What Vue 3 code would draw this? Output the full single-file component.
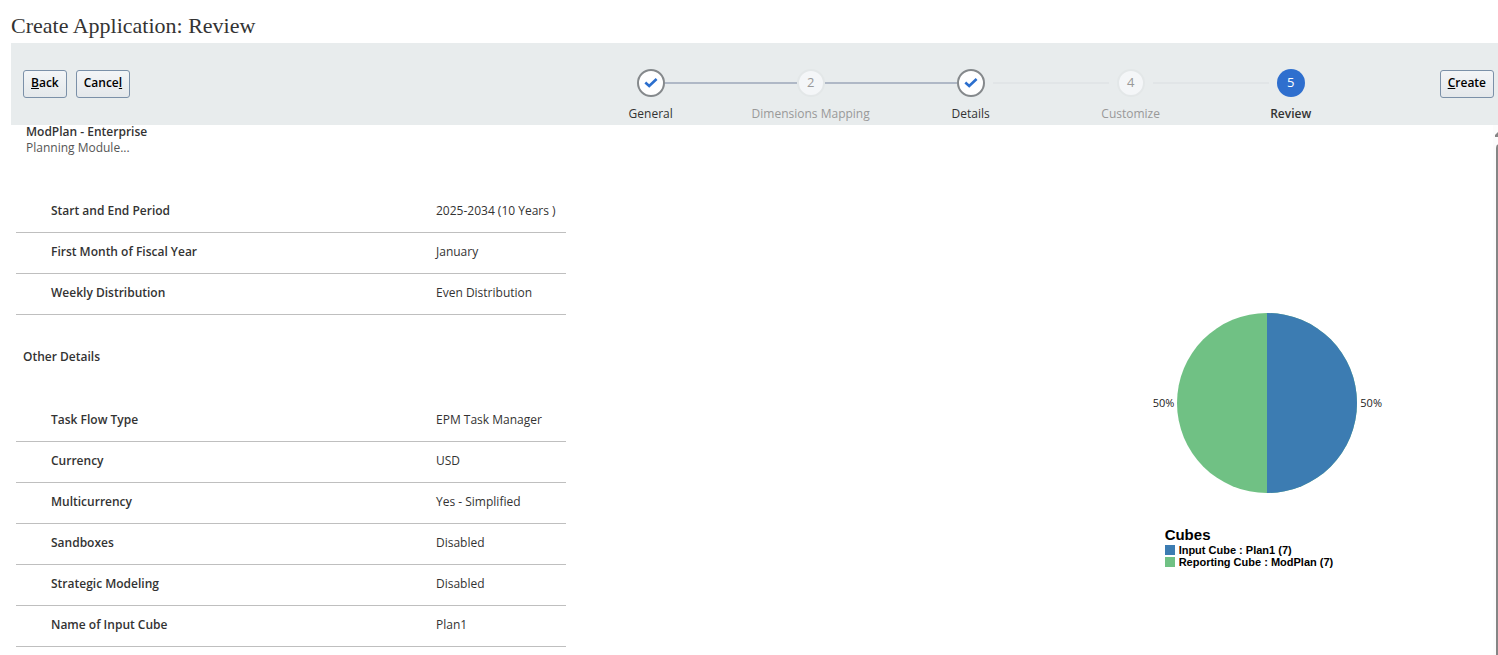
<script setup>
const steps = [
  { number: 1, label: 'General', state: 'done' },
  { number: 2, label: 'Dimensions Mapping', state: 'skipped' },
  { number: 3, label: 'Details', state: 'done' },
  { number: 4, label: 'Customize', state: 'skipped' },
  { number: 5, label: 'Review', state: 'current' },
]

const periodRows = [
  ['Start and End Period', '2025-2034 (10 Years )'],
  ['First Month of Fiscal Year', 'January'],
  ['Weekly Distribution', 'Even Distribution'],
]

const otherRows = [
  ['Task Flow Type', 'EPM Task Manager'],
  ['Currency', 'USD'],
  ['Multicurrency', 'Yes - Simplified'],
  ['Sandboxes', 'Disabled'],
  ['Strategic Modeling', 'Disabled'],
  ['Name of Input Cube', 'Plan1'],
]

const cubes = [
  { label: 'Input Cube : Plan1 (7)', kind: 'input' },
  { label: 'Reporting Cube : ModPlan (7)', kind: 'reporting' },
]
</script>

<template>
  <div class="page">
    <h1 class="title">Create Application: Review</h1>

    <header class="toolbar">
      <div class="actions">
        <button type="button" class="btn"><u>B</u>ack</button>
        <button type="button" class="btn">Cance<u>l</u></button>
      </div>
      <ol class="train">
        <li v-for="step in steps" :key="step.number" class="step" :class="step.state">
          <div class="track">
            <span class="line before"></span>
            <span class="dot">
              <svg v-if="step.state === 'done'" width="14" height="12" viewBox="0 0 14 12" aria-hidden="true">
                <path d="M1.3 5.6 L5.2 9 L12.6 2" fill="none" stroke="#2c6fce" stroke-width="2.6" />
              </svg>
              <template v-else>{{ step.number }}</template>
            </span>
            <span class="line after"></span>
          </div>
          <span class="step-label">{{ step.label }}</span>
        </li>
      </ol>
      <button type="button" class="btn"><u>C</u>reate</button>
    </header>

    <main class="content">
      <section class="details">
        <div class="module">
          <strong>ModPlan - Enterprise</strong>
          <span>Planning Module...</span>
        </div>
        <table class="facts">
          <tbody>
            <tr v-for="[name, value] in periodRows" :key="name">
              <th scope="row">{{ name }}</th>
              <td>{{ value }}</td>
            </tr>
          </tbody>
        </table>
        <h2 class="subtitle">Other Details</h2>
        <table class="facts">
          <tbody>
            <tr v-for="[name, value] in otherRows" :key="name">
              <th scope="row">{{ name }}</th>
              <td>{{ value }}</td>
            </tr>
          </tbody>
        </table>
      </section>

      <section class="chart">
        <div class="pie">
          <span>50%</span>
          <svg width="180" height="180" viewBox="0 0 180 180" role="img" aria-label="Cubes">
            <circle cx="90" cy="90" r="90" fill="#70c184" />
            <path d="M90 0 A90 90 0 0 1 90 180 Z" fill="#3c7cb2" />
          </svg>
          <span>50%</span>
        </div>
        <div class="legend">
          <h3>Cubes</h3>
          <ul>
            <li v-for="cube in cubes" :key="cube.kind">
              <span class="swatch" :class="cube.kind"></span>{{ cube.label }}
            </li>
          </ul>
        </div>
      </section>

      <div class="scrollbar" aria-hidden="true">
        <svg width="8" height="5" viewBox="0 0 8 5"><path d="M0 5 V3 L3 0 H5 L8 3 V5 Z" fill="#858585" /></svg>
        <div class="thumb"></div>
      </div>
    </main>
  </div>
</template>

<style>
body {
  background: #fff;
}
</style>

<style scoped>
.page {
  display: flex;
  flex-direction: column;
  height: 100vh;
  overflow: hidden;
  color: #333;
  font: 12px/16px "Open Sans", "Noto Sans", sans-serif;
}
.title {
  margin: 0;
  padding: 10px 11px 1px;
  height: 32px;
  font: 400 22px/32px "Liberation Serif", serif;
}
.toolbar {
  display: flex;
  align-items: flex-start;
  height: 82px;
  flex: none;
  margin-left: 11px;
  padding: 0 4px 0 12px;
  box-sizing: border-box;
  background: #e8eced;
}
.actions {
  display: flex;
  gap: 9px;
}
.btn {
  height: 28px;
  margin-top: 27px;
  padding: 0 7px 2px;
  border: 1px solid #7b90a8;
  border-radius: 3px;
  background: linear-gradient(#f3f5f7, #e4e8eb);
  color: #000;
  font: 600 12px/24px "Open Sans", "Noto Sans", sans-serif;
}
.train {
  display: flex;
  flex: 0 1 800px;
  margin: 26px 69px 0 auto;
  padding: 0;
  list-style: none;
}
.step {
  flex: 1;
  text-align: center;
}
.track {
  display: grid;
  grid-template-columns: minmax(0, 1fr) 28px minmax(0, 1fr);
  align-items: center;
}
.line {
  height: 2px;
  background: #afb8c6;
}
.dot {
  display: flex;
  align-items: center;
  justify-content: center;
  width: 28px;
  height: 28px;
  box-sizing: border-box;
  border-radius: 50%;
  font-size: 13px;
}
.done .dot {
  border: 2px solid #85898c;
  background: #fff;
}
.skipped .dot {
  padding-bottom: 2px;
  border: 2px solid #e3e7e8;
  background: #f4f6f8;
  color: #999;
}
.current .dot {
  padding-bottom: 2px;
  background: #2f6fce;
  color: #fff;
}
.step:first-child .before,
.step:last-child .after {
  visibility: hidden;
}
.step:nth-child(3) .after,
.step:nth-child(4) .line,
.step:nth-child(5) .before {
  background: #e1e5e7;
}
.step:nth-child(3) .after,
.step:nth-child(4) .after {
  margin-left: 8px;
}
.step:nth-child(4) .before,
.step:nth-child(5) .before {
  margin-right: 8px;
}
.step-label {
  display: block;
  margin-top: 9px;
  white-space: nowrap;
}
.skipped .step-label {
  color: #999;
}
.current .step-label {
  font-weight: 600;
}
.content {
  display: flex;
  flex: 1;
  min-height: 0;
}
.details {
  flex: 0 1 550px;
  margin: -1px 0 0 16px;
}
.module {
  display: flex;
  flex-direction: column;
  height: 68px;
  padding-left: 10px;
}
.module strong,
.facts th,
.subtitle {
  font-size: 12px;
  font-weight: 600;
}
.module span {
  color: #555;
}
.facts {
  width: 100%;
  table-layout: fixed;
  border-collapse: separate;
  border-spacing: 0;
}
.facts th,
.facts td {
  height: 38px;
  padding: 0 0 2px;
  border-bottom: 1px solid #bfbfbf;
  text-align: left;
}
.facts th {
  width: 385px;
  padding-left: 35px;
}
.subtitle {
  margin: 0;
  padding: 34px 0 36px 7px;
}
.chart {
  margin: 188px 111px 0 auto;
}
.pie {
  display: flex;
  align-items: center;
  gap: 3px;
  color: #222;
  font-size: 11px;
}
.pie svg {
  display: block;
}
.legend {
  margin: 33px 0 0 12px;
  color: #000;
  font: 700 11px/12px "Liberation Sans", Arial, sans-serif;
}
.legend h3 {
  margin: 0;
  font-size: 15px;
  line-height: 18px;
}
.legend ul {
  margin: 0;
  padding: 0;
  list-style: none;
}
.legend li {
  display: flex;
  align-items: center;
}
.swatch {
  width: 10px;
  height: 10px;
  margin-right: 4px;
}
.input {
  background: #3c7cb2;
}
.reporting {
  background: #70c184;
}
.scrollbar {
  display: flex;
  flex-direction: column;
  width: 5px;
  padding: 7px 0 0 2px;
  box-sizing: border-box;
  gap: 7px;
  overflow: hidden;
  background: #fcfcfc;
}
.scrollbar svg {
  flex: none;
}
.thumb {
  flex: 1;
  width: 8px;
  margin-left: 1px;
  border-radius: 4px 4px 0 0;
  background: #858585;
}
</style>
